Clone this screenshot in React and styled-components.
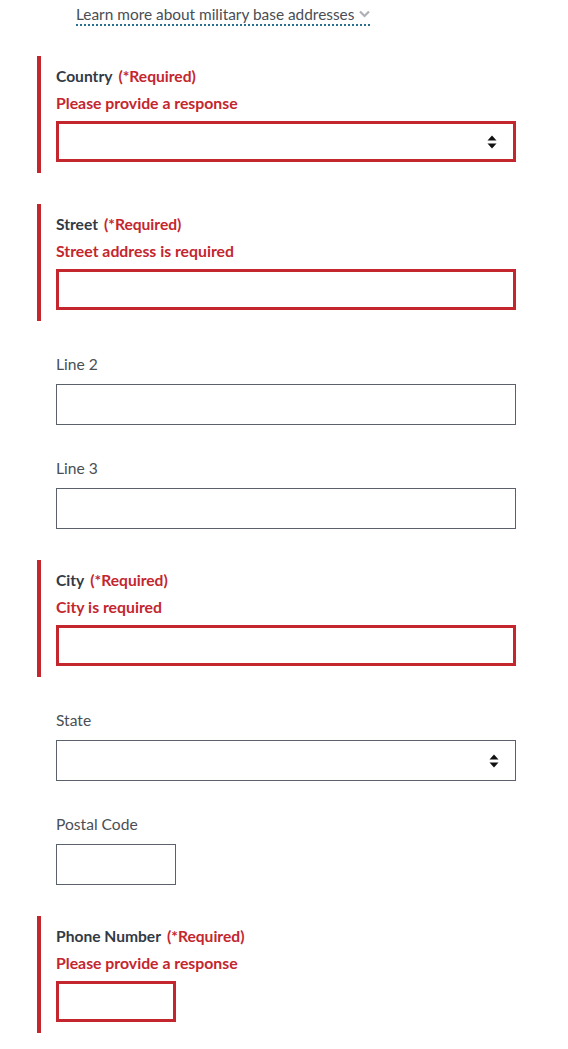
import React from 'react';
import styled, { createGlobalStyle } from 'styled-components';

const GlobalStyle = createGlobalStyle`
  body {
    margin: 0;
    background: #fff;
    font-family: Lato, "Liberation Sans", sans-serif;
    color: #323a45;
  }
`;

const StyledPage = styled.div`
  padding: 0 52px 0 56px;
  width: 460px;
`;

const StyledLinkRow = styled.div`
  padding-left: 20px;
  height: 56px;
`;

const StyledLink = styled.span`
  display: inline-flex;
  align-items: center;
  gap: 5px;
  font-size: 15.4px;
  line-height: 20px;
  padding-top: 4px;
  color: #494e55;
  border-bottom: 2px dotted #2b6f8f;
`;

const StyledField = styled.div`
  margin-top: ${({ first }) => (first ? '0' : '33px')};
  display: flex;
  flex-direction: column;
`;

const StyledErrorGroup = styled.div`
  margin: ${({ first }) => (first ? '0' : '31px')} 0 0 -19px;
  padding: 10px 0 11px 15px;
  border-left: 4px solid #c4262e;
  display: flex;
  flex-direction: column;
`;

const StyledLabel = styled.label`
  font-size: 15.6px;
  line-height: 20px;
  height: 20px;
  font-weight: ${({ error }) => (error ? 700 : 400)};
  color: ${({ error }) => (error ? '#323a45' : '#4a4f55')};
  margin-bottom: ${({ error }) => (error ? '7px' : '10px')};
`;

const StyledRequired = styled.span`
  color: #c4262e;
  margin-left: 6px;
`;

const StyledMessage = styled.span`
  font-size: 15.8px;
  line-height: 20px;
  height: 20px;
  font-weight: 700;
  color: #c4262e;
  margin-bottom: 8px;
`;

const StyledBox = styled.div`
  position: relative;
  box-sizing: border-box;
  height: 41px;
  flex-shrink: 0;
  width: ${({ narrow }) => (narrow ? '120px' : '460px')};
  border: ${({ error }) => (error ? '3px solid #c4262e' : '1px solid #5b616b')};
  background: #fff;
`;

const StyledArrows = styled.svg`
  position: absolute;
  right: 16px;
  top: 50%;
  transform: translateY(-50%);
`;

const Arrows = () => (
  <StyledArrows width="10" height="14" viewBox="0 0 10 14">
    <path d="M5 0.5 L9.5 5.5 L0.5 5.5 Z" fill="#111" />
    <path d="M5 13.5 L9.5 8.5 L0.5 8.5 Z" fill="#111" />
  </StyledArrows>
);

const Chevron = () => (
  <svg width="11" height="8" viewBox="0 0 11 8">
    <path d="M1 1.5 L5.5 6 L10 1.5" stroke="#aeb0b5" strokeWidth="2.2" fill="none" />
  </svg>
);

const fields = [
  { label: 'Country', error: 'Please provide a response', select: true },
  { label: 'Street', error: 'Street address is required' },
  { label: 'Line 2' },
  { label: 'Line 3' },
  { label: 'City', error: 'City is required' },
  { label: 'State', select: true },
  { label: 'Postal Code', narrow: true },
  { label: 'Phone Number', error: 'Please provide a response', narrow: true },
];

const Field = ({ item, first }) => {
  const box = (
    <StyledBox error={!!item.error} narrow={item.narrow}>
      {item.select && <Arrows />}
    </StyledBox>
  );

  if (item.error) {
    return (
      <StyledErrorGroup first={first}>
        <StyledLabel error>
          {item.label}
          <StyledRequired>(*Required)</StyledRequired>
        </StyledLabel>
        <StyledMessage>{item.error}</StyledMessage>
        {box}
      </StyledErrorGroup>
    );
  }

  return (
    <StyledField first={first}>
      <StyledLabel>{item.label}</StyledLabel>
      {box}
    </StyledField>
  );
};

const App = () => (
  <>
    <GlobalStyle />
    <StyledPage>
      <StyledLinkRow>
        <StyledLink>
          Learn more about military base addresses
          <Chevron />
        </StyledLink>
      </StyledLinkRow>
      {fields.map((item, i) => (
        <Field key={item.label} item={item} first={i === 0} />
      ))}
    </StyledPage>
  </>
);

export default App;
